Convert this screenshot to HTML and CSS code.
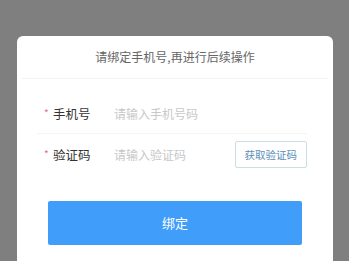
FILE: index.html
```html
<!DOCTYPE html>
<html lang="zh">
<head>
<meta charset="utf-8">
<link rel="stylesheet" href="styles.css">
</head>
<body>
<div class="card">
  <div class="title">请绑定手机号,再进行后续操作</div>
  <div class="form">
    <div class="row">
      <span class="star">*</span>
      <span class="label">手机号</span>
      <span class="ph">请输入手机号码</span>
    </div>
    <div class="row">
      <span class="star">*</span>
      <span class="label">验证码</span>
      <span class="ph">请输入验证码</span>
      <span class="code">获取验证码</span>
    </div>
  </div>
  <div class="btn">绑定</div>
</div>
</body>
</html>
```
FILE: styles.css
```css
html, body {
  margin: 0;
  padding: 0;
  height: 100%;
  overflow: hidden;
}
body {
  background: #7f7f7f;
  font-family: "Noto Sans CJK SC", "Noto Sans", sans-serif;
}
.card {
  margin: 36px 16px 0 17px;
  height: 225px;
  background: #fff;
  border-radius: 6px 6px 0 0;
}
.title {
  height: 42px;
  line-height: 42px;
  text-align: center;
  font-size: 12px;
  color: #666;
  margin: 0 5px;
  border-bottom: 1px solid #f3f3f3;
}
.form {
  padding: 14px 26px 0 26px;
}
.row {
  display: flex;
  align-items: center;
  height: 40px;
}
.row + .row {
  border-top: 1px solid #f5f5f5;
  margin-left: -6px;
  padding-left: 6px;
}
.star {
  color: #e2707a;
  font-size: 10px;
  width: 9px;
  margin-left: 1px;
  position: relative;
  top: -1px;
}
.label {
  font-size: 12.5px;
  color: #333;
  width: 61px;
}
.ph {
  font-size: 12px;
  color: #c8c8c8;
  flex: 1;
}
.code {
  font-size: 10.5px;
  color: #5b8fba;
  border: 1px solid #c9dfe2;
  border-radius: 2px;
  height: 25px;
  line-height: 25px;
  padding: 0 9px;
  margin-right: 0;
}
.btn {
  margin: 27px 31px 0 31px;
  height: 44px;
  line-height: 44px;
  background: #409dfa;
  border-radius: 2px;
  color: #fff;
  text-align: center;
  font-size: 13px;
}
```
